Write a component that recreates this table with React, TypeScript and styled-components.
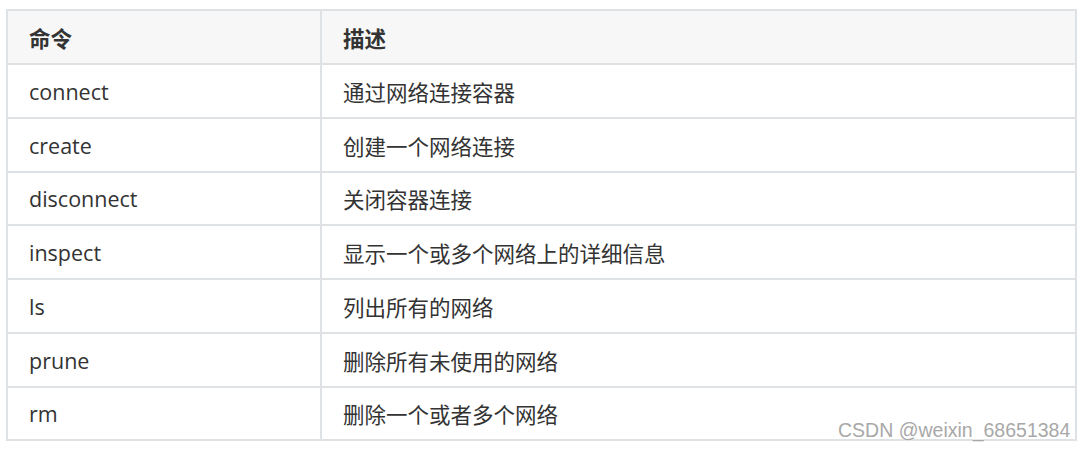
import React from 'react';
import styled, { createGlobalStyle } from 'styled-components';

interface Command {
  name: string;
  description: string;
}

const commands: Command[] = [
  { name: 'connect', description: '通过网络连接容器' },
  { name: 'create', description: '创建一个网络连接' },
  { name: 'disconnect', description: '关闭容器连接' },
  { name: 'inspect', description: '显示一个或多个网络上的详细信息' },
  { name: 'ls', description: '列出所有的网络' },
  { name: 'prune', description: '删除所有未使用的网络' },
  { name: 'rm', description: '删除一个或者多个网络' }
];

const GlobalStyle = createGlobalStyle`
  html, body {
    margin: 0;
    padding: 0;
    background: #ffffff;
  }
  body {
    font-family: 'Open Sans', 'Noto Sans CJK SC', sans-serif;
  }
`;

const Page = styled.div`
  position: relative;
  padding: 9px 0 0 6px;
  width: 1085px;
  height: 451px;
  box-sizing: border-box;
`;

const Table = styled.table`
  width: 1071px;
  border-collapse: separate;
  border-spacing: 0;
  border-top: 2px solid #dfe2e5;
  border-left: 2px solid #dfe2e5;
  table-layout: fixed;
  font-size: 21.5px;
  color: #333333;
`;

const HeadCell = styled.th<{ $first?: boolean }>`
  box-sizing: border-box;
  width: ${(p) => (p.$first ? '314px' : 'auto')};
  height: 54px;
  padding: 1px 20px 0 21px;
  text-align: left;
  font-weight: 700;
  background: #f7f7f7;
  border-right: 2px solid #dfe2e5;
  border-bottom: 2px solid #dfe2e5;
  vertical-align: middle;
`;

const Cell = styled.td`
  box-sizing: border-box;
  height: 53.75px;
  padding: 1px 20px 0 21px;
  background: #ffffff;
  border-right: 2px solid #dfe2e5;
  border-bottom: 2px solid #dfe2e5;
  vertical-align: middle;
  white-space: nowrap;
`;

const Watermark = styled.span`
  position: absolute;
  left: 838px;
  top: 419px;
  font-family: 'Liberation Sans', Arial, sans-serif;
  font-size: 19.5px;
  color: #a8a8a8;
  text-shadow: 0 0 2px #ffffff;
  white-space: nowrap;
`;

const App: React.FC = () => {
  return (
    <Page>
      <GlobalStyle />
      <Table>
        <thead>
          <tr>
            <HeadCell $first>命令</HeadCell>
            <HeadCell>描述</HeadCell>
          </tr>
        </thead>
        <tbody>
          {commands.map((c) => (
            <tr key={c.name}>
              <Cell>{c.name}</Cell>
              <Cell>{c.description}</Cell>
            </tr>
          ))}
        </tbody>
      </Table>
      <Watermark>CSDN @weixin_68651384</Watermark>
    </Page>
  );
};

export default App;
